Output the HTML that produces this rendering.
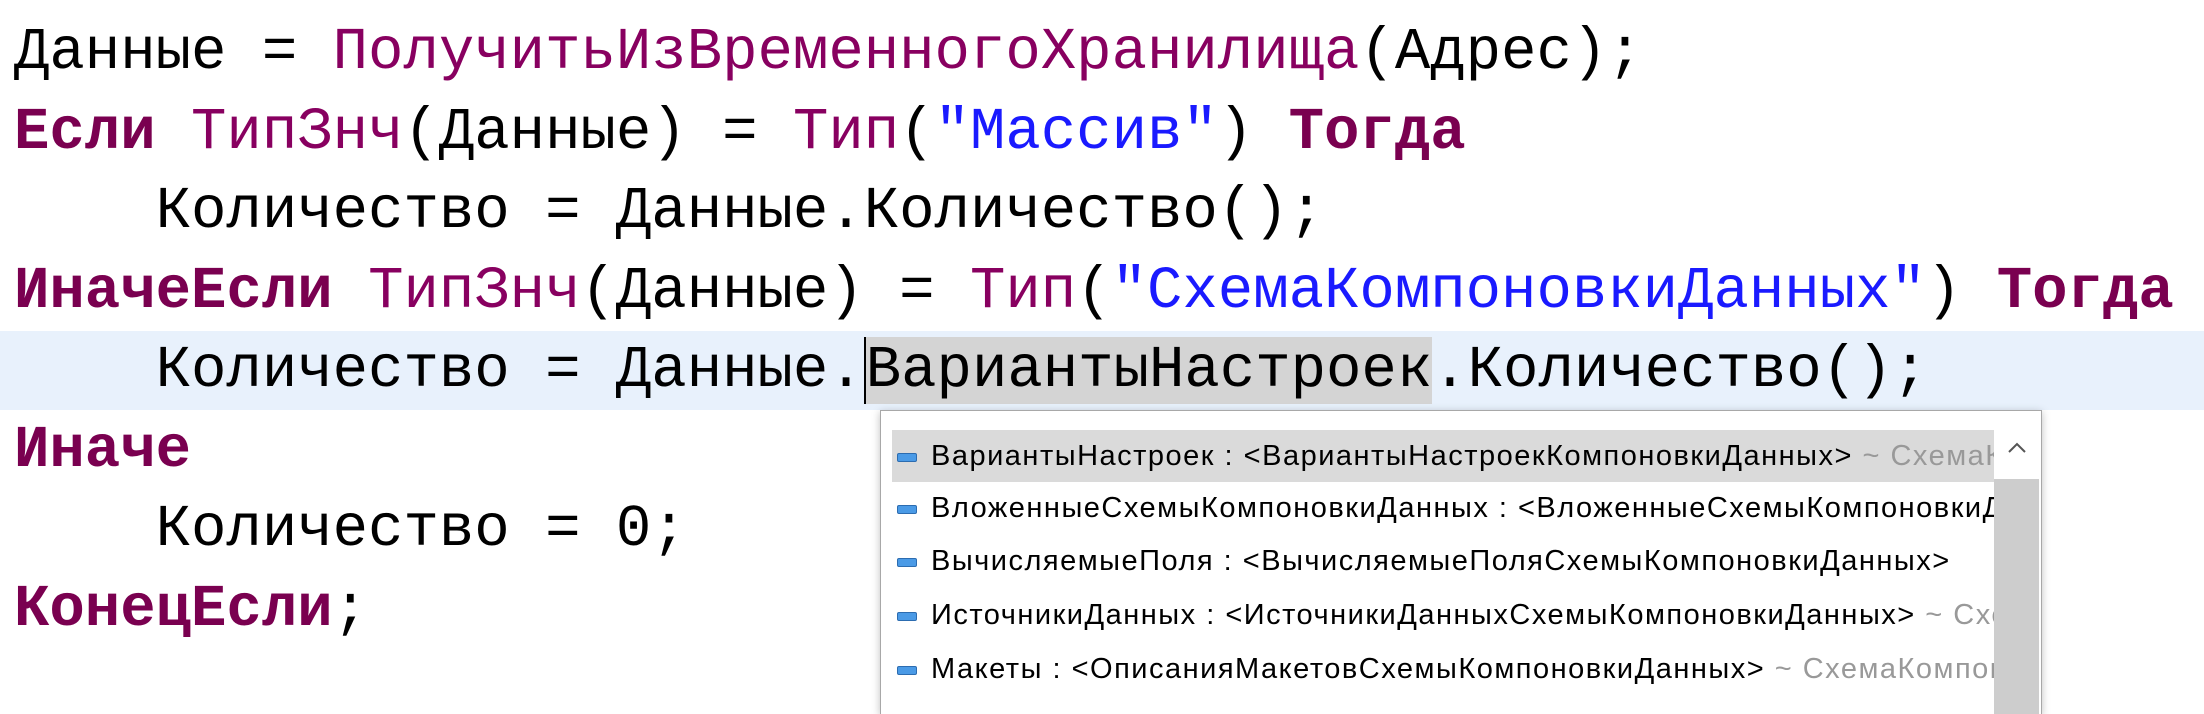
<!DOCTYPE html>
<html><head><meta charset="utf-8"><style>
html,body{margin:0;width:2204px;height:714px;overflow:hidden}
body{background:#fff;position:relative;font-family:"Liberation Mono","DejaVu Sans Mono",monospace;}
.ln{position:absolute;left:14px;height:79.5px;line-height:79.5px;font-size:59px;white-space:pre;color:#000;}
.k{color:#7a0050;font-weight:bold}
.f{color:#880060}
.s{color:#1a1aff}
.hl{position:absolute;left:0;width:2204px;top:331px;height:79px;background:#e8f1fc}
.sel{background:#d4d4d4}
.pop{position:absolute;left:880px;top:410px;width:1160px;height:303px;background:#fff;border:1px solid #a8a8a8;border-bottom:none;box-shadow:0 2px 8px rgba(0,0,0,.25);font-family:"Liberation Sans","DejaVu Sans",sans-serif;overflow:hidden}
.it{position:absolute;left:11px;width:1102px;height:52px;line-height:52px;font-size:29px;letter-spacing:1.5px;white-space:nowrap;overflow:hidden;color:#000}
.it i{position:absolute;left:5px;top:23px;width:18px;height:7px;background:#4a9ae6;border:1px solid #2c6cb0;border-radius:2px}
.it span{position:absolute;left:39px}
.g{color:#999}
.sb{position:absolute;left:1113px;top:18px;width:45px;height:285px;background:#fff}
.th{position:absolute;left:1113px;top:68px;width:45px;height:235px;background:#cdcdcd}
</style></head><body>
<div class="hl"></div>
<div class="ln" style="top:13px">Данные = <span class="f">ПолучитьИзВременногоХранилища</span>(Адрес);</div>
<div class="ln" style="top:92.5px"><span class="k">Если</span> <span class="f">ТипЗнч</span>(Данные) = <span class="f">Тип</span>(<span class="s">"Массив"</span>) <span class="k">Тогда</span></div>
<div class="ln" style="top:172px">    Количество = Данные.Количество();</div>
<div class="ln" style="top:251.5px"><span class="k">ИначеЕсли</span> <span class="f">ТипЗнч</span>(Данные) = <span class="f">Тип</span>(<span class="s">"СхемаКомпоновкиДанных"</span>) <span class="k">Тогда</span></div>
<div class="ln" style="top:331px">    Количество = Данные.<span class="sel" style="border-left:2px solid #000">ВариантыНастроек</span>.Количество();</div>
<div class="ln" style="top:410.5px"><span class="k">Иначе</span></div>
<div class="ln" style="top:490px">    Количество = 0;</div>
<div class="ln" style="top:569.5px"><span class="k">КонецЕсли</span>;</div>
<div class="pop">
<div class="it" style="top:19px;background:#dadada"><i></i><span>ВариантыНастроек : &lt;ВариантыНастроекКомпоновкиДанных&gt; <span class="g" style="position:static">~ СхемаКомпоновкиДанных</span></span></div>
<div class="it" style="top:71px"><i></i><span>ВложенныеСхемыКомпоновкиДанных : &lt;ВложенныеСхемыКомпоновкиДанных&gt;</span></div>
<div class="it" style="top:124px"><i></i><span>ВычисляемыеПоля : &lt;ВычисляемыеПоляСхемыКомпоновкиДанных&gt;</span></div>
<div class="it" style="top:178px"><i></i><span>ИсточникиДанных : &lt;ИсточникиДанныхСхемыКомпоновкиДанных&gt; <span class="g" style="position:static">~ Схема</span></span></div>
<div class="it" style="top:232px"><i></i><span>Макеты : &lt;ОписанияМакетовСхемыКомпоновкиДанных&gt; <span class="g" style="position:static">~ СхемаКомпоновкиДанных</span></span></div>
<div class="sb"></div>
<div class="th"></div>
<svg style="position:absolute;left:1126px;top:30px" width="20" height="14"><path d="M2 11 L10 3 L18 11" fill="none" stroke="#555" stroke-width="2"/></svg>
</div>
</body></html>
